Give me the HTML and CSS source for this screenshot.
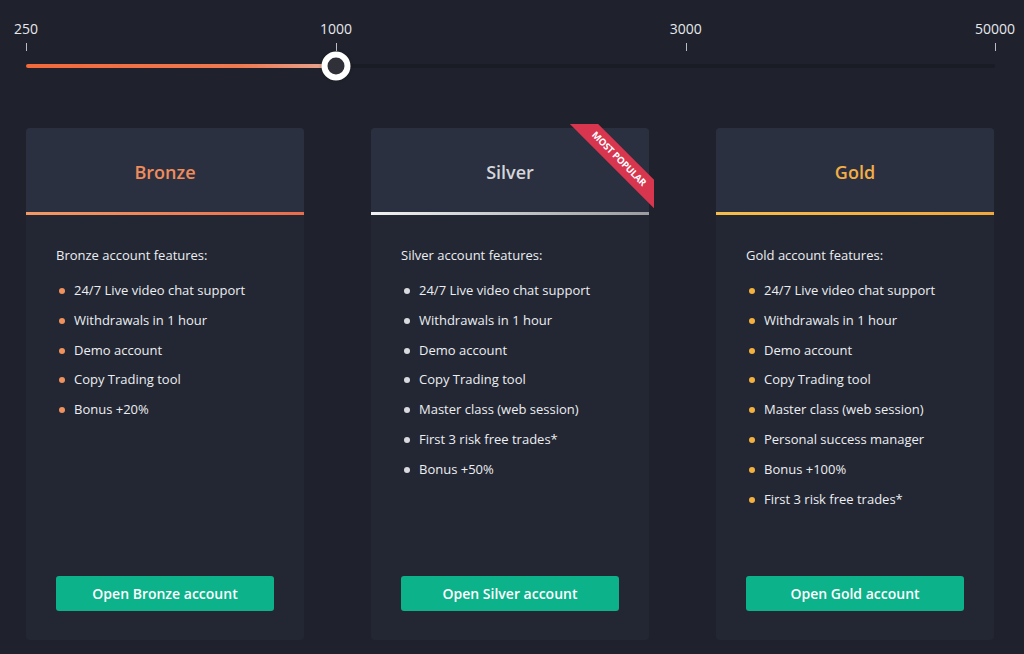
FILE: index.html
```html
<!DOCTYPE html>
<html lang="en">
<head>
    <meta charset="UTF-8">
    <meta name="viewport" content="width=device-width, initial-scale=1.0">
    <title>Accounts</title>
    <link rel="stylesheet" href="styles.css">
</head>
<body>
    <div class="slider">
        <div class="marks">
            <div class="mark" style="left: 0%"><span>250</span><i></i></div>
            <div class="mark" style="left: 32%"><span>1000</span><i></i></div>
            <div class="mark" style="left: 68.1%"><span>3000</span><i></i></div>
            <div class="mark" style="left: 100%"><span>50000</span><i></i></div>
        </div>
        <div class="track">
            <div class="fill" style="width: 32%"></div>
            <div class="thumb" style="left: 32%"></div>
        </div>
    </div>

    <div class="cards">
        <div class="card bronze">
            <div class="card-head"><h3>Bronze</h3></div>
            <div class="card-body">
                <p>Bronze account features:</p>
                <ul>
                    <li>24/7 Live video chat support</li>
                    <li>Withdrawals in 1 hour</li>
                    <li>Demo account</li>
                    <li>Copy Trading tool</li>
                    <li>Bonus +20%</li>
                </ul>
                <button class="open-btn">Open Bronze account</button>
            </div>
        </div>

        <div class="card silver">
            <div class="ribbon"><span>Most popular</span></div>
            <div class="card-head"><h3>Silver</h3></div>
            <div class="card-body">
                <p>Silver account features:</p>
                <ul>
                    <li>24/7 Live video chat support</li>
                    <li>Withdrawals in 1 hour</li>
                    <li>Demo account</li>
                    <li>Copy Trading tool</li>
                    <li>Master class (web session)</li>
                    <li>First 3 risk free trades*</li>
                    <li>Bonus +50%</li>
                </ul>
                <button class="open-btn">Open Silver account</button>
            </div>
        </div>

        <div class="card gold">
            <div class="card-head"><h3>Gold</h3></div>
            <div class="card-body">
                <p>Gold account features:</p>
                <ul>
                    <li>24/7 Live video chat support</li>
                    <li>Withdrawals in 1 hour</li>
                    <li>Demo account</li>
                    <li>Copy Trading tool</li>
                    <li>Master class (web session)</li>
                    <li>Personal success manager</li>
                    <li>Bonus +100%</li>
                    <li>First 3 risk free trades*</li>
                </ul>
                <button class="open-btn">Open Gold account</button>
            </div>
        </div>
    </div>
</body>
</html>
```

FILE: styles.css
```css
body {
    margin: 0;
    padding: 0;
    background: #1f222c;
    color: #eceef2;
    font-family: 'Open Sans', 'Noto Sans', sans-serif;
    font-size: 13px;
}
/* Slider */
.slider {
    margin: 0 29px 0 26px;
    padding-top: 19px;
}
.marks {
    position: relative;
    height: 34px;
}
.mark {
    position: absolute;
    top: 0;
    width: 0;
}
.mark span {
    position: absolute;
    left: 0;
    top: 0;
    transform: translateX(-50%);
    line-height: 19px;
    font-size: 14px;
    color: #e6e8ec;
}
.mark i {
    position: absolute;
    left: 0;
    top: 24px;
    width: 1px;
    height: 8px;
    background: #b9bcc3;
}
.track {
    position: relative;
    margin-top: 11px;
    height: 4px;
    background: #191c25;
    border-radius: 2px;
}
.fill {
    height: 4px;
    border-radius: 2px;
    background: linear-gradient(to right, #f2693b 0%, #ee7a52 70%, #e6a896 100%);
}
.thumb {
    position: absolute;
    top: 2px;
    width: 17px;
    height: 17px;
    border: 6px solid #fff;
    border-radius: 50%;
    background: #303138;
    box-shadow: 0 0 3px rgba(0, 0, 0, 0.4);
    transform: translate(-50%, -50%);
}
/* Cards */
.cards {
    display: flex;
    gap: 67px;
    margin: 60px 29px 0 26px;
}
.card {
    position: relative;
    width: 278px;
    height: 512px;
    background: #232733;
    border-radius: 4px;
    display: flex;
    flex-direction: column;
}
.card-head {
    height: 87px;
    box-sizing: border-box;
    padding-top: 4px;
    background: #2b3040;
    border-radius: 4px 4px 0 0;
    display: flex;
    align-items: center;
    justify-content: center;
    border-bottom: 3px solid;
}
.card-head h3 {
    margin: 0;
    font-size: 18px;
    font-weight: 600;
}
.bronze .card-head { border-image: linear-gradient(to right, #f39a64, #ea6c4c) 1; }
.bronze h3 { color: #f08c5c; }
.silver .card-head { border-image: linear-gradient(to right, #f2f2f2, #9a9c9f) 1; }
.silver h3 { color: #d4d6db; }
.gold .card-head { border-image: linear-gradient(to right, #f7bd4c, #f1a73c) 1; }
.gold h3 { color: #f4ae45; }

.card-body {
    flex: 1;
    display: flex;
    flex-direction: column;
    padding: 31px 30px 29px;
}
.card-body p {
    margin: 0;
    line-height: 19px;
}
.card-body ul {
    list-style: none;
    margin: 16px 0 0;
    padding: 0;
}
.card-body li {
    position: relative;
    padding-left: 18px;
    line-height: 19px;
    margin-bottom: 10.8px;
}
.card-body li::before {
    content: "";
    position: absolute;
    left: 3px;
    top: 7px;
    width: 6px;
    height: 6px;
    border-radius: 50%;
}
.bronze li::before { background: #f0925e; }
.silver li::before { background: #d8dadf; }
.gold li::before { background: #f5b13e; }

.open-btn {
    margin-top: auto;
    height: 35px;
    width: 218px;
    border: none;
    border-radius: 3px;
    background: #0bb28a;
    color: #fff;
    font-family: inherit;
    font-size: 14px;
    font-weight: 600;
    cursor: pointer;
}
.open-btn:hover {
    background: #0a9e7b;
}
/* Ribbon */
.ribbon {
    position: absolute;
    top: -4px;
    right: -5px;
    width: 85px;
    height: 85px;
    overflow: hidden;
}
.ribbon span {
    position: absolute;
    left: -15px;
    top: 25px;
    width: 130px;
    height: 20px;
    line-height: 20px;
    background: #d8354f;
    color: #fff;
    text-align: center;
    text-transform: uppercase;
    font-size: 9.5px;
    font-weight: 700;
    letter-spacing: -0.2px;
    transform: rotate(45deg);
}
```
